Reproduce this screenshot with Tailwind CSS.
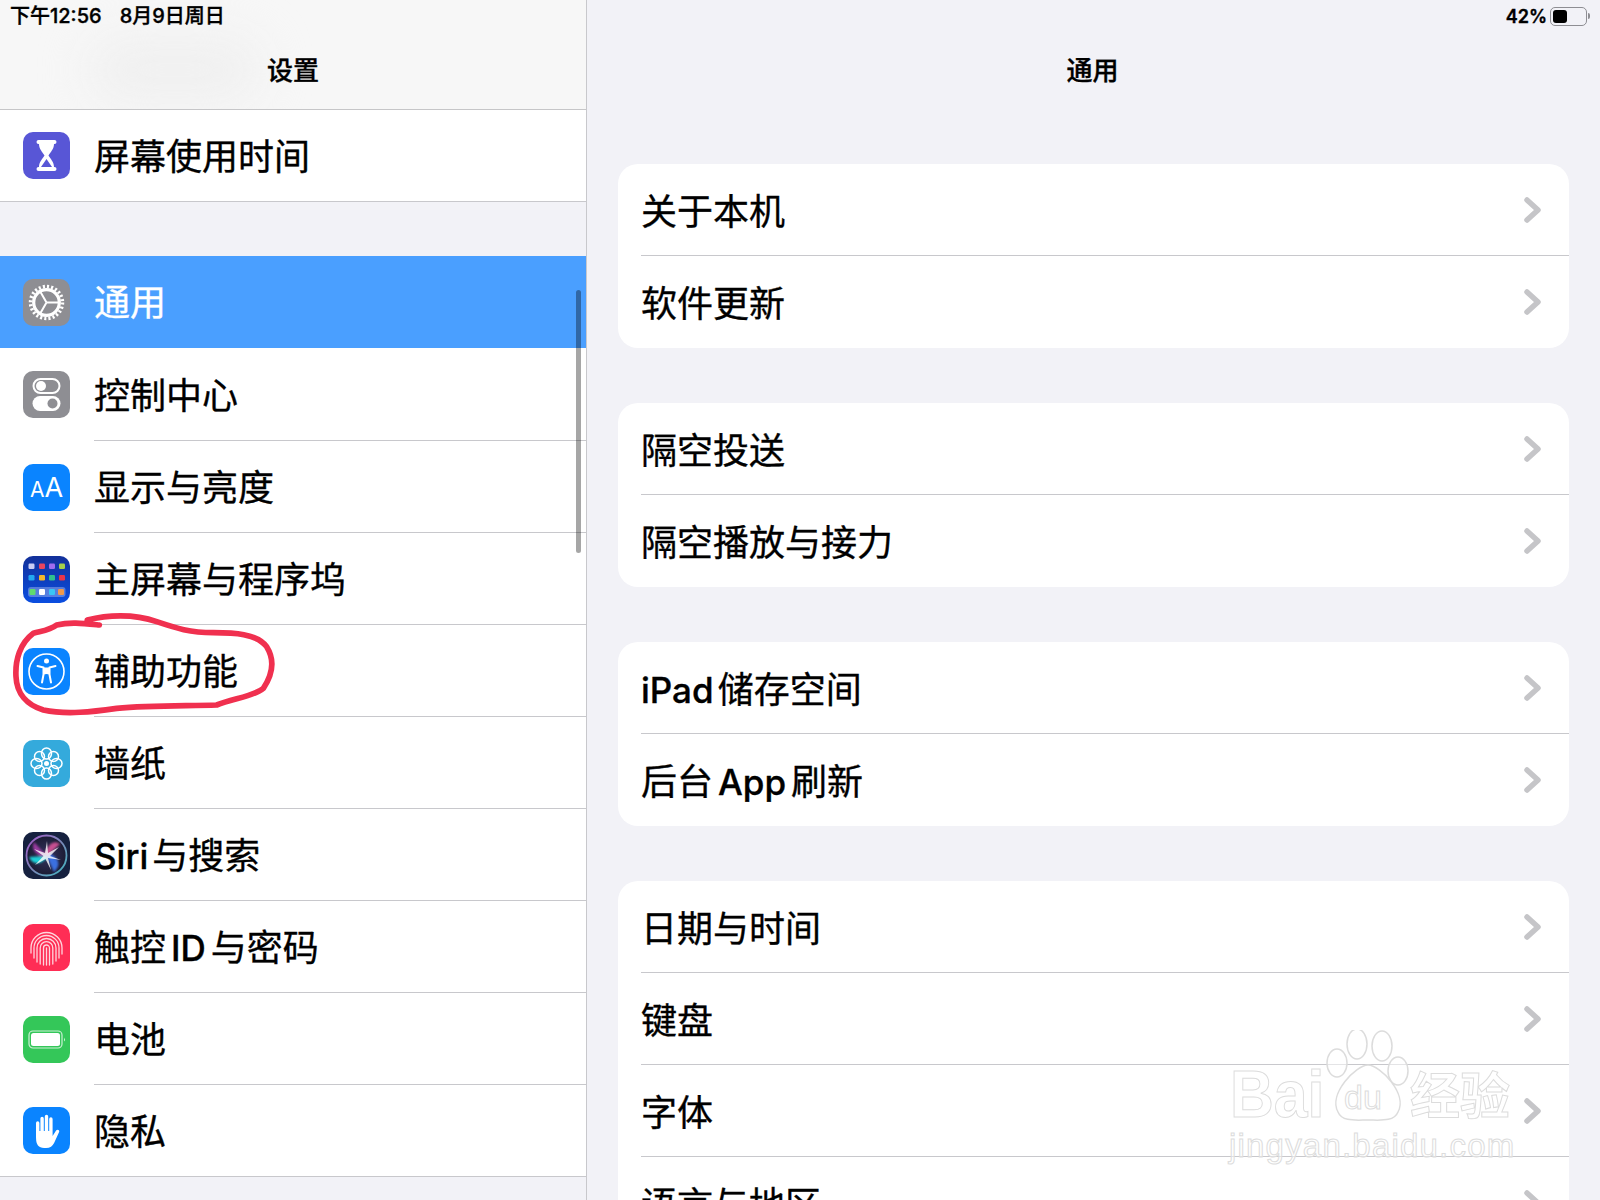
<!DOCTYPE html>
<html lang="zh-CN">
<head>
    <meta charset="UTF-8">
    <title>设置</title>
    <script src="https://cdn.jsdelivr.net/npm/@tailwindcss/browser@4"></script>
</head>
<body class="bg-[#f2f2f7] text-black font-['Inter','Noto_Sans_CJK_SC',sans-serif] [-webkit-text-stroke:.35px_currentColor]">
<div class="relative flex w-[1600px] h-[1200px] overflow-hidden">

    <!-- Sidebar -->
    <div class="relative w-[587px] h-full border-r border-[#c8c8cc] shrink-0 bg-[#f2f2f7]">
        <!-- Header -->
        <div class="relative h-[110px] bg-[#f7f7f7] border-b border-[#c6c6c8] overflow-hidden">
            <div class="absolute left-[90px] top-[40px] w-[170px] h-[60px] rounded-full bg-[#efefef] blur-xl"></div>
            <div class="relative pl-[10px] pt-[3px] text-[20px] leading-[26px] font-medium">下午12:56<span class="ml-[18px]">8月9日周日</span></div>
            <div class="absolute inset-x-0 top-[53px] text-center text-[26px] leading-[36px] font-medium">设置</div>
        </div>

        <!-- Screen time -->
        <div class="flex items-center h-[92px] pl-[23px] gap-[24px] bg-white border-b border-[#c8c8cc]">
            <svg class="w-[47px] h-[47px] shrink-0" viewBox="0 0 47 47">
                <rect width="47" height="47" rx="10" fill="#5856d6"/>
                <path d="M15.500 8h16a2 2 0 0 1 0 4h-.5c0 5-3.500 8-5.500 11.500c2 3.500 5.500 6.500 5.500 11.500h.5a2 2 0 0 1 0 4h-16a2 2 0 0 1 0-4h.5c0-5 3.500-8 5.500-11.500c-2-3.500-5.500-6.500-5.500-11.500h-.5a2 2 0 0 1 0-4z" fill="#fff"/>
                <path d="M23.500 27l5.500 8h-11z" fill="#5856d6"/>
            </svg>
            <div class="text-[36px] pt-[2px]">屏幕使用时间</div>
        </div>

        <div class="h-[54px]"></div>

        <!-- General, selected -->
        <div class="flex items-center h-[92px] pl-[23px] gap-[24px] bg-[#4a9fff]">
            <svg class="w-[47px] h-[47px] shrink-0" viewBox="0 0 47 47">
                <rect width="47" height="47" rx="10" fill="#8e8e93"/>
                <circle cx="23.500" cy="23.500" r="16" fill="none" stroke="#fff" stroke-width="3.500" stroke-dasharray="2.100 2.089"/>
                <circle cx="23.500" cy="23.500" r="12.800" fill="none" stroke="#fff" stroke-width="3.200"/>
                <path d="M23.500 23.500H36M23.500 23.500L17.200 12.600M23.500 23.500L17.200 34.400" fill="none" stroke="#fff" stroke-width="2"/>
            </svg>
            <div class="text-[36px] pt-[2px] text-white">通用</div>
        </div>

        <div class="bg-white">
            <!-- Control centre -->
            <div class="flex items-center h-[93px] pl-[23px] gap-[24px]">
                <svg class="w-[47px] h-[47px] shrink-0" viewBox="0 0 47 47">
                    <rect width="47" height="47" rx="10" fill="#8e8e93"/>
                    <rect x="10.500" y="8" width="26" height="14" rx="7" fill="none" stroke="#fff" stroke-width="2"/>
                    <circle cx="18" cy="15" r="5" fill="#fff"/>
                    <rect x="9.500" y="25" width="28" height="15" rx="7.500" fill="#fff"/>
                    <circle cx="29.500" cy="32.500" r="5" fill="#8e8e93"/>
                </svg>
                <div class="flex items-center flex-1 h-full pt-[3px] text-[36px] border-b border-[#c8c8cc]">控制中心</div>
            </div>
            <!-- Display -->
            <div class="flex items-center h-[92px] pl-[23px] gap-[24px]">
                <div class="flex items-baseline justify-center w-[47px] h-[47px] shrink-0 rounded-[10px] bg-[#0a84ff] text-white leading-[47px] font-normal [-webkit-text-stroke:0]">
                    <span class="text-[21px]">A</span><span class="text-[27px]">A</span>
                </div>
                <div class="flex items-center flex-1 h-full pt-[3px] text-[36px] border-b border-[#c8c8cc]">显示与亮度</div>
            </div>
            <!-- Home screen -->
            <div class="flex items-center h-[92px] pl-[23px] gap-[24px]">
                <svg class="w-[47px] h-[47px] shrink-0" viewBox="0 0 47 47">
                    <defs><linearGradient id="homeBg" x1="0" y1="0" x2="0" y2="1"><stop offset="0" stop-color="#12309a"/><stop offset="1" stop-color="#0b4ee0"/></linearGradient></defs>
                    <rect width="47" height="47" rx="10" fill="url(#homeBg)"/>
                    <rect x="5.500" y="7.500" width="6" height="5.500" rx="1.200" fill="#c9cdf5"/>
                    <rect x="16" y="7.500" width="6" height="5.500" rx="1.200" fill="#e8455f"/>
                    <rect x="26" y="7.500" width="6" height="5.500" rx="1.200" fill="#a06cf0"/>
                    <rect x="36" y="7.500" width="6" height="5.500" rx="1.200" fill="#a5d04c"/>
                    <rect x="5.500" y="19" width="6" height="5.500" rx="1.200" fill="#22a7f0"/>
                    <rect x="16" y="19" width="6" height="5.500" rx="1.200" fill="#f5b82e"/>
                    <rect x="26" y="19" width="6" height="5.500" rx="1.200" fill="#2fc28e"/>
                    <rect x="36" y="19" width="6" height="5.500" rx="1.200" fill="#e8354a"/>
                    <rect x="5" y="31" width="37.500" height="10" rx="3" fill="#ffffff" fill-opacity=".3"/>
                    <rect x="6.500" y="33" width="6" height="6" rx="1.200" fill="#5fdc6e"/>
                    <rect x="16" y="33" width="6" height="6" rx="1.200" fill="#ffffff"/>
                    <rect x="26" y="33" width="6" height="6" rx="1.200" fill="#38c6f5"/>
                    <rect x="35" y="33" width="6" height="6" rx="1.200" fill="#f0994a"/>
                </svg>
                <div class="flex items-center flex-1 h-full pt-[3px] text-[36px] border-b border-[#c8c8cc]">主屏幕与程序坞</div>
            </div>
            <!-- Accessibility -->
            <div class="flex items-center h-[92px] pl-[23px] gap-[24px]">
                <svg class="w-[47px] h-[47px] shrink-0" viewBox="0 0 47 47">
                    <rect width="47" height="47" rx="10" fill="#0a84ff"/>
                    <circle cx="23.500" cy="23.500" r="17.500" fill="none" stroke="#fff" stroke-width="1.600"/>
                    <circle cx="23.500" cy="13" r="2.500" fill="#fff"/>
                    <path d="M14.500 18l6 1.500v7l-1.500 8M32.500 18l-6 1.500v7l1.500 8" fill="none" stroke="#fff" stroke-width="2" stroke-linecap="round" stroke-linejoin="round"/>
                    <path d="M20.500 19.500h6v7l-3-.5l-3 .5z" fill="#fff"/>
                </svg>
                <div class="flex items-center flex-1 h-full pt-[3px] text-[36px] border-b border-[#c8c8cc]">辅助功能</div>
            </div>
            <!-- Wallpaper -->
            <div class="flex items-center h-[92px] pl-[23px] gap-[24px]">
                <svg class="w-[47px] h-[47px] shrink-0" viewBox="0 0 47 47">
                    <rect width="47" height="47" rx="10" fill="#34aadc"/>
                    <g fill="none" stroke="#fff" stroke-width="1.500">
                        <ellipse cx="23.500" cy="13.500" rx="5" ry="5.500"/>
                        <ellipse cx="23.500" cy="33.500" rx="5" ry="5.500"/>
                        <ellipse cx="13.500" cy="23.500" rx="5.500" ry="5"/>
                        <ellipse cx="33.500" cy="23.500" rx="5.500" ry="5"/>
                        <circle cx="16.500" cy="16.500" r="5"/>
                        <circle cx="30.500" cy="16.500" r="5"/>
                        <circle cx="16.500" cy="30.500" r="5"/>
                        <circle cx="30.500" cy="30.500" r="5"/>
                    </g>
                    <circle cx="23.500" cy="23.500" r="2.500" fill="#fff"/>
                </svg>
                <div class="flex items-center flex-1 h-full pt-[3px] text-[36px] border-b border-[#c8c8cc]">墙纸</div>
            </div>
            <!-- Siri -->
            <div class="flex items-center h-[92px] pl-[23px] gap-[24px]">
                <svg class="w-[47px] h-[47px] shrink-0" viewBox="0 0 47 47">
                    <defs>
                        <radialGradient id="siriBg"><stop offset="0" stop-color="#34345e"/><stop offset="1" stop-color="#1b1b33"/></radialGradient>
                        <linearGradient id="siriRing" x1="0" y1="0" x2="1" y2="1"><stop offset="0" stop-color="#a45ac8"/><stop offset=".5" stop-color="#7c86b8"/><stop offset="1" stop-color="#3fb8c0"/></linearGradient>
                        <filter id="siriBlur" x="-20%" y="-20%" width="140%" height="140%"><feGaussianBlur stdDeviation="1"/></filter>
                        <filter id="siriSoft" x="-20%" y="-20%" width="140%" height="140%"><feGaussianBlur stdDeviation=".5"/></filter>
                    </defs>
                    <rect width="47" height="47" rx="10" fill="#16213f"/>
                    <circle cx="23.500" cy="23.500" r="20" fill="url(#siriBg)" stroke="url(#siriRing)" stroke-width="1.800"/>
                    <g filter="url(#siriBlur)">
                        <path d="M23 24L6 25Q12 37 24 26Z" fill="#1fd0d8"/>
                        <path d="M23 23L31 40Q41 30 28 22Z" fill="#3b6fe0"/>
                        <path d="M23 23L11 10Q7 20 20 25Z" fill="#9a3a9f"/>
                        <path d="M24 24L37 12Q28 6 22 21Z" fill="#c84f90"/>
                    </g>
                    <path d="M24 9L25 21L36 15L27 24L38 28L25 26L28 38L22.500 27L12 33L20.500 24L11 17L22 21Z" fill="#fff" fill-opacity=".8" filter="url(#siriSoft)"/>
                </svg>
                <div class="flex items-center flex-1 h-full pt-[3px] text-[36px] border-b border-[#c8c8cc]"><span class="text-[35px] font-medium">Siri</span><span class="ml-[4px]">与搜索</span></div>
            </div>
            <!-- Touch ID -->
            <div class="flex items-center h-[92px] pl-[23px] gap-[24px]">
                <svg class="w-[47px] h-[47px] shrink-0" viewBox="0 0 47 47">
                    <rect width="47" height="47" rx="10" fill="#ff2d55"/>
                    <g fill="none" stroke="#fff" stroke-opacity=".8" stroke-width="1.300" stroke-linecap="round">
                        <path d="M8 29V24a15.500 15.500 0 0 1 31 0v6"/>
                        <path d="M11 34V24a12.500 12.500 0 0 1 25 0v10"/>
                        <path d="M14 38V24a9.500 9.500 0 0 1 19 0v13"/>
                        <path d="M17.200 40V24a6.300 6.300 0 0 1 12.600 0v16"/>
                        <path d="M20.500 41V24a3 3 0 0 1 6 0v17"/>
                        <path d="M23.500 24V41"/>
                    </g>
                </svg>
                <div class="flex items-center flex-1 h-full pt-[3px] text-[36px] border-b border-[#c8c8cc]">触控<span class="mx-[5px] text-[35px] font-medium">ID</span>与密码</div>
            </div>
            <!-- Battery -->
            <div class="flex items-center h-[92px] pl-[23px] gap-[24px]">
                <svg class="w-[47px] h-[47px] shrink-0" viewBox="0 0 47 47">
                    <rect width="47" height="47" rx="10" fill="#34c759"/>
                    <rect x="6" y="15" width="33" height="17" rx="4" fill="none" stroke="#fff" stroke-opacity=".75" stroke-width="1.200"/>
                    <rect x="8" y="17" width="29" height="13" rx="2.500" fill="#fff"/>
                    <path d="M41 21.500q1.800 2 0 4z" fill="#fff" fill-opacity=".8"/>
                </svg>
                <div class="flex items-center flex-1 h-full pt-[3px] text-[36px] border-b border-[#c8c8cc]">电池</div>
            </div>
            <!-- Privacy -->
            <div class="flex items-center h-[92px] pl-[23px] gap-[24px] border-b border-[#c8c8cc]">
                <svg class="w-[47px] h-[47px] shrink-0" viewBox="0 0 47 47">
                    <rect width="47" height="47" rx="10" fill="#0a84ff"/>
                    <path d="M13 30V16a1.700 1.700 0 0 1 3.400 0v8h1V11.500a1.700 1.700 0 0 1 3.400 0V24h1V9.500a1.700 1.700 0 0 1 3.400 0V24h1V12a1.700 1.700 0 0 1 3.400 0v17l3.500-5.500c1.200-1.800 4-.5 3 1.500l-5 11c-1.500 3-4 5-8 5h-2c-5.500 0-8-4-8-9z" fill="#fff"/>
                </svg>
                <div class="text-[36px] pt-[3px]">隐私</div>
            </div>
        </div>

        <!-- Scroll indicator -->
        <div class="absolute left-[576px] top-[290px] w-[5px] h-[263px] rounded-full bg-black/35"></div>
    </div>

    <!-- Detail pane -->
    <div class="flex-1 min-w-0">
        <div class="relative h-[164px]">
            <div class="absolute right-[10px] top-[3px] flex items-center h-[26px]">
                <span class="text-[18px] font-semibold mr-[3px]">42%</span>
                <div class="flex items-center">
                    <div class="w-[37px] h-[19px] p-[2px] rounded-[5px] border border-[#8e8e93]">
                        <div class="w-[14px] h-full rounded-[3px] bg-black"></div>
                    </div>
                    <div class="w-[2px] h-[6px] ml-[1px] rounded-r-full bg-[#8e8e93]"></div>
                </div>
            </div>
            <div class="absolute inset-x-0 top-[53px] text-center text-[26px] leading-[36px] font-medium pr-[2px]">通用</div>
        </div>

        <div class="ml-[31px] w-[951px]">
            <div class="mb-[55px] rounded-[20px] bg-white overflow-hidden">
                <div class="flex items-center justify-between h-[92px] ml-[23px] pr-[28px] text-[36px] border-b border-[#c8c8cc]">
                    <span class="pt-[4px]">关于本机</span>
                    <svg class="w-[17px] h-[26px]" viewBox="0 0 17 26"><path d="M3 3l11 10l-11 10" fill="none" stroke="#c5c5c8" stroke-width="5.500" stroke-linecap="round" stroke-linejoin="round"/></svg>
                </div>
                <div class="flex items-center justify-between h-[92px] ml-[23px] pr-[28px] text-[36px]">
                    <span class="pt-[4px]">软件更新</span>
                    <svg class="w-[17px] h-[26px]" viewBox="0 0 17 26"><path d="M3 3l11 10l-11 10" fill="none" stroke="#c5c5c8" stroke-width="5.500" stroke-linecap="round" stroke-linejoin="round"/></svg>
                </div>
            </div>

            <div class="mb-[55px] rounded-[20px] bg-white overflow-hidden">
                <div class="flex items-center justify-between h-[92px] ml-[23px] pr-[28px] text-[36px] border-b border-[#c8c8cc]">
                    <span class="pt-[4px]">隔空投送</span>
                    <svg class="w-[17px] h-[26px]" viewBox="0 0 17 26"><path d="M3 3l11 10l-11 10" fill="none" stroke="#c5c5c8" stroke-width="5.500" stroke-linecap="round" stroke-linejoin="round"/></svg>
                </div>
                <div class="flex items-center justify-between h-[92px] ml-[23px] pr-[28px] text-[36px]">
                    <span class="pt-[4px]">隔空播放与接力</span>
                    <svg class="w-[17px] h-[26px]" viewBox="0 0 17 26"><path d="M3 3l11 10l-11 10" fill="none" stroke="#c5c5c8" stroke-width="5.500" stroke-linecap="round" stroke-linejoin="round"/></svg>
                </div>
            </div>

            <div class="mb-[55px] rounded-[20px] bg-white overflow-hidden">
                <div class="flex items-center justify-between h-[92px] ml-[23px] pr-[28px] text-[36px] border-b border-[#c8c8cc]">
                    <div class="pt-[4px]"><span class="text-[35px] font-medium">iPad</span><span class="ml-[4px]">储存空间</span></div>
                    <svg class="w-[17px] h-[26px]" viewBox="0 0 17 26"><path d="M3 3l11 10l-11 10" fill="none" stroke="#c5c5c8" stroke-width="5.500" stroke-linecap="round" stroke-linejoin="round"/></svg>
                </div>
                <div class="flex items-center justify-between h-[92px] ml-[23px] pr-[28px] text-[36px]">
                    <div class="pt-[4px]">后台<span class="mx-[5px] text-[35px] font-medium">App</span>刷新</div>
                    <svg class="w-[17px] h-[26px]" viewBox="0 0 17 26"><path d="M3 3l11 10l-11 10" fill="none" stroke="#c5c5c8" stroke-width="5.500" stroke-linecap="round" stroke-linejoin="round"/></svg>
                </div>
            </div>

            <div class="rounded-t-[20px] bg-white overflow-hidden">
                <div class="flex items-center justify-between h-[92px] ml-[23px] pr-[28px] text-[36px] border-b border-[#c8c8cc]">
                    <span class="pt-[4px]">日期与时间</span>
                    <svg class="w-[17px] h-[26px]" viewBox="0 0 17 26"><path d="M3 3l11 10l-11 10" fill="none" stroke="#c5c5c8" stroke-width="5.500" stroke-linecap="round" stroke-linejoin="round"/></svg>
                </div>
                <div class="flex items-center justify-between h-[92px] ml-[23px] pr-[28px] text-[36px] border-b border-[#c8c8cc]">
                    <span class="pt-[4px]">键盘</span>
                    <svg class="w-[17px] h-[26px]" viewBox="0 0 17 26"><path d="M3 3l11 10l-11 10" fill="none" stroke="#c5c5c8" stroke-width="5.500" stroke-linecap="round" stroke-linejoin="round"/></svg>
                </div>
                <div class="flex items-center justify-between h-[92px] ml-[23px] pr-[28px] text-[36px] border-b border-[#c8c8cc]">
                    <span class="pt-[4px]">字体</span>
                    <svg class="w-[17px] h-[26px]" viewBox="0 0 17 26"><path d="M3 3l11 10l-11 10" fill="none" stroke="#c5c5c8" stroke-width="5.500" stroke-linecap="round" stroke-linejoin="round"/></svg>
                </div>
                <div class="flex items-center justify-between h-[92px] ml-[23px] pr-[28px] text-[36px]">
                    <span class="pt-[4px]">语言与地区</span>
                    <svg class="w-[17px] h-[26px]" viewBox="0 0 17 26"><path d="M3 3l11 10l-11 10" fill="none" stroke="#c5c5c8" stroke-width="5.500" stroke-linecap="round" stroke-linejoin="round"/></svg>
                </div>
            </div>
        </div>
    </div>

    <!-- Red hand-drawn circle -->
    <svg class="absolute left-0 top-[440px] w-[400px] h-[300px] pointer-events-none" viewBox="0 0 1200 900">
        <path d="M262 540C320 525 400 520 470 545C530 565 570 578 640 578C700 578 770 580 800 620C825 660 820 700 790 745C760 770 700 775 650 795C560 798 450 795 350 805C280 815 200 825 130 810C80 795 50 760 48 710C45 660 60 610 100 580C130 572 150 570 170 555C210 545 250 550 298 555" fill="none" stroke="#f0304f" stroke-width="17" stroke-linecap="round" stroke-linejoin="round"/>
    </svg>

    <!-- Watermark -->
    <div class="absolute left-[1228px] top-[1030px] w-[290px] h-[140px] pointer-events-none [-webkit-text-stroke:1px_#dcdcdc]">
        <svg class="absolute inset-0 w-full h-full" viewBox="0 0 290 140">
            <g fill="#fff" fill-opacity=".5" stroke="#dcdcdc" stroke-width="1.500">
                <ellipse cx="129" cy="14" rx="10" ry="15"/>
                <ellipse cx="154" cy="16" rx="10" ry="15"/>
                <ellipse cx="109" cy="33" rx="10" ry="14"/>
                <ellipse cx="170" cy="41" rx="10" ry="14"/>
                <path d="M110 82c-10-18 18-47 30-47s40 29 30 47c-4 10-18 8-30 8s-26 2-30-8z"/>
            </g>
        </svg>
        <div class="absolute left-[2px] top-[31px] origin-left scale-x-[.92] font-['Liberation_Sans',sans-serif] font-bold text-[66px] leading-[66px] text-white/50">Bai</div>
        <div class="absolute left-[116px] top-[50px] font-['Liberation_Sans',sans-serif] text-[34px] leading-[34px] text-white/50">du</div>
        <div class="absolute left-[182px] top-[38px] font-bold text-[50px] leading-[56px] text-white/50">经验</div>
        <div class="absolute left-[1px] top-[96px] font-['Liberation_Sans',sans-serif] text-[33px] leading-[40px] tracking-[1.2px] text-white/50">jingyan.baidu.com</div>
    </div>
</div>
</body>
</html>
